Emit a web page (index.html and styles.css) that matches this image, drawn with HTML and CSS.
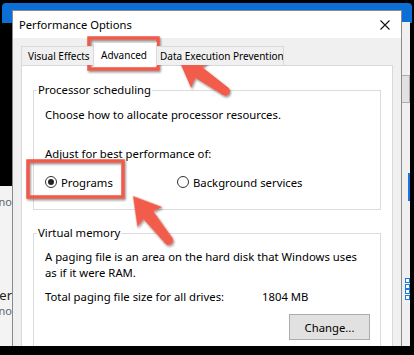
FILE: index.html
```html
<!DOCTYPE html>
<html>
<head>
<meta charset="utf-8">
<link rel="stylesheet" href="styles.css">
</head>
<body>
<div class="screen">
  <div class="band"></div>
  <div class="bg-left">
    <div class="bl-dark"></div>
    <div class="bl-light">
      <span class="bl-no1">no</span>
      <span class="bl-er">er</span>
      <span class="bl-no2">no</span>
    </div>
  </div>
  <div class="bg-right">
    <div class="br-box"></div>
    <div class="br-blue"></div>
    <div class="br-grip"><i></i><i></i><i></i><i></i></div>
  </div>
  <div class="dialog">
    <div class="titlebar">
      <span class="title">Performance Options</span>
      <svg class="close" width="10" height="10" viewBox="0 0 10 10"><path d="M0.5 0.5 L9.5 9.5 M9.5 0.5 L0.5 9.5" stroke="#111" stroke-width="1.1" fill="none"/></svg>
    </div>
    <div class="dlg-body">
      <div class="tabs">
        <div class="tab t1">Visual Effects</div>
        <div class="tab sel">Advanced</div>
        <div class="tab t3">Data Execution Prevention</div>
      </div>
      <div class="panel">
        <fieldset class="group g1">
          <legend>Processor scheduling</legend>
          <div class="gbody">
            <p class="line choose">Choose how to allocate processor resources.</p>
            <p class="line adjust">Adjust for best performance of:</p>
            <div class="radios">
              <span class="radio r1"><span class="dot checked"></span>Programs</span>
              <span class="radio"><span class="dot"></span>Background services</span>
            </div>
          </div>
        </fieldset>
        <fieldset class="group g2">
          <legend>Virtual memory</legend>
          <div class="gbody">
            <p class="line para">A paging file is an area on the hard disk that Windows uses<br>as if it were RAM.</p>
            <div class="line total"><span class="total-label">Total paging file size for all drives:</span><span>1804 MB</span></div>
            <div class="btn-row"><span class="btn">Change...</span></div>
          </div>
        </fieldset>
      </div>
    </div>
  </div>
  <svg class="annot" width="414" height="355" viewBox="0 0 414 355">
    <defs>
      <filter id="sh" x="-20%" y="-20%" width="140%" height="140%">
        <feDropShadow dx="1" dy="1.5" stdDeviation="1.2" flood-color="#000" flood-opacity="0.45"/>
      </filter>
    </defs>
    <g filter="url(#sh)" fill="none" stroke="#f05a4a" stroke-width="3.5">
      <rect x="89" y="38" width="69" height="31"/>
      <rect x="28" y="161" width="95" height="36"/>
    </g>
    <g filter="url(#sh)" fill="#f25b4b">
      <g transform="translate(178 58) rotate(35)">
        <polygon points="0,0 28,-17 24,0 28,17"/>
        <polygon points="22,-6.5 58,-4.5 58,4.5 22,6.5"/>
        <circle cx="58" cy="0" r="4.5"/>
      </g>
      <g transform="translate(133 196) rotate(51.3)">
        <polygon points="0,0 27,-16 23,0 27,16"/>
        <polygon points="21,-6.5 57,-4.5 57,4.5 21,6.5"/>
        <circle cx="57" cy="0" r="4.5"/>
      </g>
    </g>
  </svg>
</div>
</body>
</html>
```
FILE: styles.css
```css
html, body {
  margin: 0;
  padding: 0;
  background: #000;
}
body {
  font-family: "Noto Sans", "Open Sans", sans-serif;
  color: #000;
}
.screen {
  position: relative;
  width: 414px;
  height: 355px;
  overflow: hidden;
  background: #000;
}
.band {
  position: absolute;
  left: 2px;
  top: 3px;
  width: 410px;
  height: 20px;
  background: #0b6fd6;
  border-radius: 4px 4px 0 0;
}
.bg-left {
  position: absolute;
  left: 0;
  top: 23px;
  width: 12px;
  height: 323px;
  display: flex;
  flex-direction: column;
}
.bl-dark {
  height: 163px;
  background: #000;
}
.bl-light {
  flex: 1;
  background: #f3f3f3;
  display: flex;
  flex-direction: column;
  align-items: flex-end;
  font-size: 11px;
  line-height: 12px;
  overflow: hidden;
}
.bl-no1 { margin-top: 10px; color: #666; }
.bl-er { margin-top: 80px; color: #222; font-size: 13px; line-height: 14px; }
.bl-no2 { margin-top: 3px; color: #666; }
.bg-right {
  position: absolute;
  left: 401px;
  top: 22px;
  width: 9px;
  height: 324px;
  background: #f0f0f0;
  display: flex;
  flex-direction: column;
}
.br-box {
  margin-top: 53px;
  height: 26px;
  border: 1px solid #adadad;
  border-left: none;
  background: #e1e1e1;
}
.br-blue {
  margin-top: 70px;
  align-self: flex-end;
  width: 2px;
  height: 28px;
  background: #1a73e0;
}
.br-grip {
  margin-top: 77px;
  margin-left: 4px;
  display: flex;
  flex-direction: column;
  gap: 0.5px;
}
.br-grip i {
  display: block;
  width: 3px;
  height: 3px;
  border: 1px solid #1f7ae0;
  background: #fff;
}
.dialog {
  position: absolute;
  left: 12px;
  top: 10px;
  width: 388px;
  height: 335px;
  border: 1px solid #8a8a8a;
  border-bottom: none;
  background: #f0f0f0;
  overflow: hidden;
}
.titlebar {
  height: 27px;
  background: #fff;
  display: flex;
  align-items: center;
  justify-content: space-between;
  padding: 0 11px 0 6px;
}
.title {
  font-size: 11.2px;
}
.close { display: block; }
.dlg-body {
  padding: 4px 8px 0;
}
.tabs {
  display: flex;
  align-items: flex-end;
  height: 23px;
  position: relative;
  z-index: 1;
  font-size: 10px;
}
.tab {
  box-sizing: border-box;
  height: 19px;
  border: 1px solid #d9d9d9;
  border-bottom: none;
  background: #f0f0f0;
  display: flex;
  align-items: center;
  padding-left: 5px;
  white-space: nowrap;
  overflow: hidden;
}
.t1 { width: 74px; padding-left: 6px; }
.sel {
  width: 64px;
  height: 24px;
  margin-left: -2px;
  margin-bottom: -1px;
  padding-left: 7px;
  background: #fff;
  position: relative;
  z-index: 2;
}
.t3 { width: 129px; margin-left: -2px; padding-left: 4px; }
.panel {
  border: 1px solid #d9d9d9;
  background: #fff;
  padding: 16px 11px 0;
  height: 300px;
  font-size: 11.3px;
}
.group {
  margin: 0;
  padding: 0 10px 19px 3px;
  border: 1px solid #dcdcdc;
  min-width: 0;
}
.group legend {
  padding: 0 1px;
  line-height: 16px;
}
.g2 { margin-top: 15px; }
.gbody { padding-left: 8px; }
.line {
  margin: 0;
  line-height: 16px;
}
.choose { margin-top: 9px; }
.adjust { margin-top: 23px; }
.radios {
  display: flex;
  align-items: center;
  height: 16px;
  margin-top: 12px;
}
.radio {
  display: flex;
  align-items: center;
  gap: 4px;
}
.r1 { width: 132px; }
.dot {
  box-sizing: border-box;
  width: 12px;
  height: 12px;
  border: 1px solid #333;
  border-radius: 50%;
  display: flex;
  align-items: center;
  justify-content: center;
}
.dot.checked::after {
  content: "";
  width: 6px;
  height: 6px;
  border-radius: 50%;
  background: #222;
}
.para { margin-top: 8px; }
.total { margin-top: 8px; display: flex; }
.total-label { width: 217px; }
.btn-row {
  display: flex;
  justify-content: flex-end;
  margin-top: 9px;
}
.btn {
  box-sizing: border-box;
  width: 81px;
  height: 26px;
  border: 1px solid #adadad;
  background: #e1e1e1;
  display: flex;
  align-items: center;
  justify-content: center;
}
.annot {
  position: absolute;
  left: 0;
  top: 0;
  pointer-events: none;
}
```
